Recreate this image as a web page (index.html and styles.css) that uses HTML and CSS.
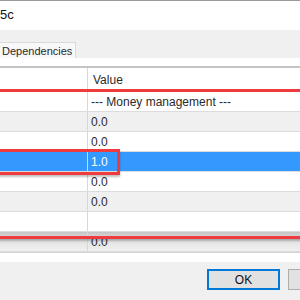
FILE: index.html
```html
<!DOCTYPE html>
<html>
<head>
  <title>Inputs</title>
  <link rel="stylesheet" href="styles.css">
</head>
<body>
  <div class="window">
    <div class="title">5c</div>
    <div class="tabs">
      <div class="tab">Dependencies</div>
    </div>
    <div class="panel">
      <div class="grid">
        <div class="row head"><div class="name"></div><div class="val">Value</div></div>
        <div class="row"><div class="name"></div><div class="val">--- Money management ---</div></div>
        <div class="row alt"><div class="name"></div><div class="val">0.0</div></div>
        <div class="row"><div class="name"></div><div class="val">0.0</div></div>
        <div class="row sel"><div class="name"></div><div class="val">1.0</div></div>
        <div class="row"><div class="name"></div><div class="val">0.0</div></div>
        <div class="row alt"><div class="name"></div><div class="val">0.0</div></div>
        <div class="row"><div class="name"></div><div class="val"></div></div>
        <div class="row alt shade"><div class="name"></div><div class="val">0.0</div></div>
      </div>
      <!-- highlight marks drawn over the grid -->
      <div class="mark big"></div>
      <div class="mark small"></div>
    </div>
    <div class="footer">
      <button class="btn default">OK</button>
      <button class="btn" aria-label="Cancel"></button>
    </div>
  </div>
</body>
</html>
```

FILE: styles.css
```css
body {
  margin: 0;
  padding: 0;
  font-family: "Liberation Sans", Arial, sans-serif;
  font-size: 12px;
  color: #2a2a2a;
  background-color: #f0f0f0;
}

.window {
  width: 300px;
  height: 300px;
  overflow: hidden;
  display: flex;
  flex-direction: column;
}

.title {
  height: 29px;
  border-top: 1px solid #9a9a9a;
  background-color: white;
  font-size: 13px;
  line-height: 28px;
  color: #111;
}

.tabs {
  height: 28px;
  background-color: #f0f0f0;
  display: flex;
  align-items: flex-end;
}

.tab {
  height: 15px;
  line-height: 16px;
  padding: 0 3px 0 2px;
  margin-left: -1px;
  background-color: #f8f8f8;
  border: 1px solid #d9d9d9;
  border-bottom: none;
  font-size: 11px;
}

.panel {
  position: relative;
  background-color: white;
  padding-top: 8px;
  height: 196px;
}

.grid {
  border-top: 2px solid #c4c4c8;
  border-bottom: 1px solid #d4d4d4;
}

.row {
  display: flex;
  height: 19px;
  border-bottom: 1px solid #dcdcdc;
  line-height: 20px;
}

.row.head {
  height: 24px;
  line-height: 24px;
  border-bottom: none;
}

.row.alt {
  background-color: #f0f0f0;
}

.row.sel {
  background-color: #3399ff;
  color: white;
}

.row.shade {
  background: linear-gradient(#c4c4c4, #e4e4e4 45%, #f0f0f0);
}

.name {
  width: 87px;
  border-right: 1px solid #d8d8d8;
}

.val {
  padding-left: 3px;
  white-space: nowrap;
}

.row.head .val {
  padding-left: 5px;
}

.mark {
  position: absolute;
  border: 3px solid #ef3a3e;
  box-shadow: 0 2px 2px rgba(0, 0, 0, 0.25);
}

.mark.big {
  top: 31px;
  left: -10px;
  right: -10px;
  height: 144px;
}

.mark.small {
  top: 91px;
  left: -10px;
  width: 124px;
  height: 20px;
}

.footer {
  flex: 1;
  display: flex;
  justify-content: flex-end;
  align-items: flex-start;
  gap: 8px;
  padding-top: 7px;
  margin-right: -61px;
  background-color: #f0f0f0;
}

.btn {
  flex: none;
  width: 73px;
  height: 21px;
  font-family: "Liberation Sans", Arial, sans-serif;
  font-size: 12px;
  color: #111;
  background-color: #e1e1e1;
  border: 1px solid #adadad;
  padding: 0;
}

.btn.default {
  border: 2px solid #0078d7;
}
```
